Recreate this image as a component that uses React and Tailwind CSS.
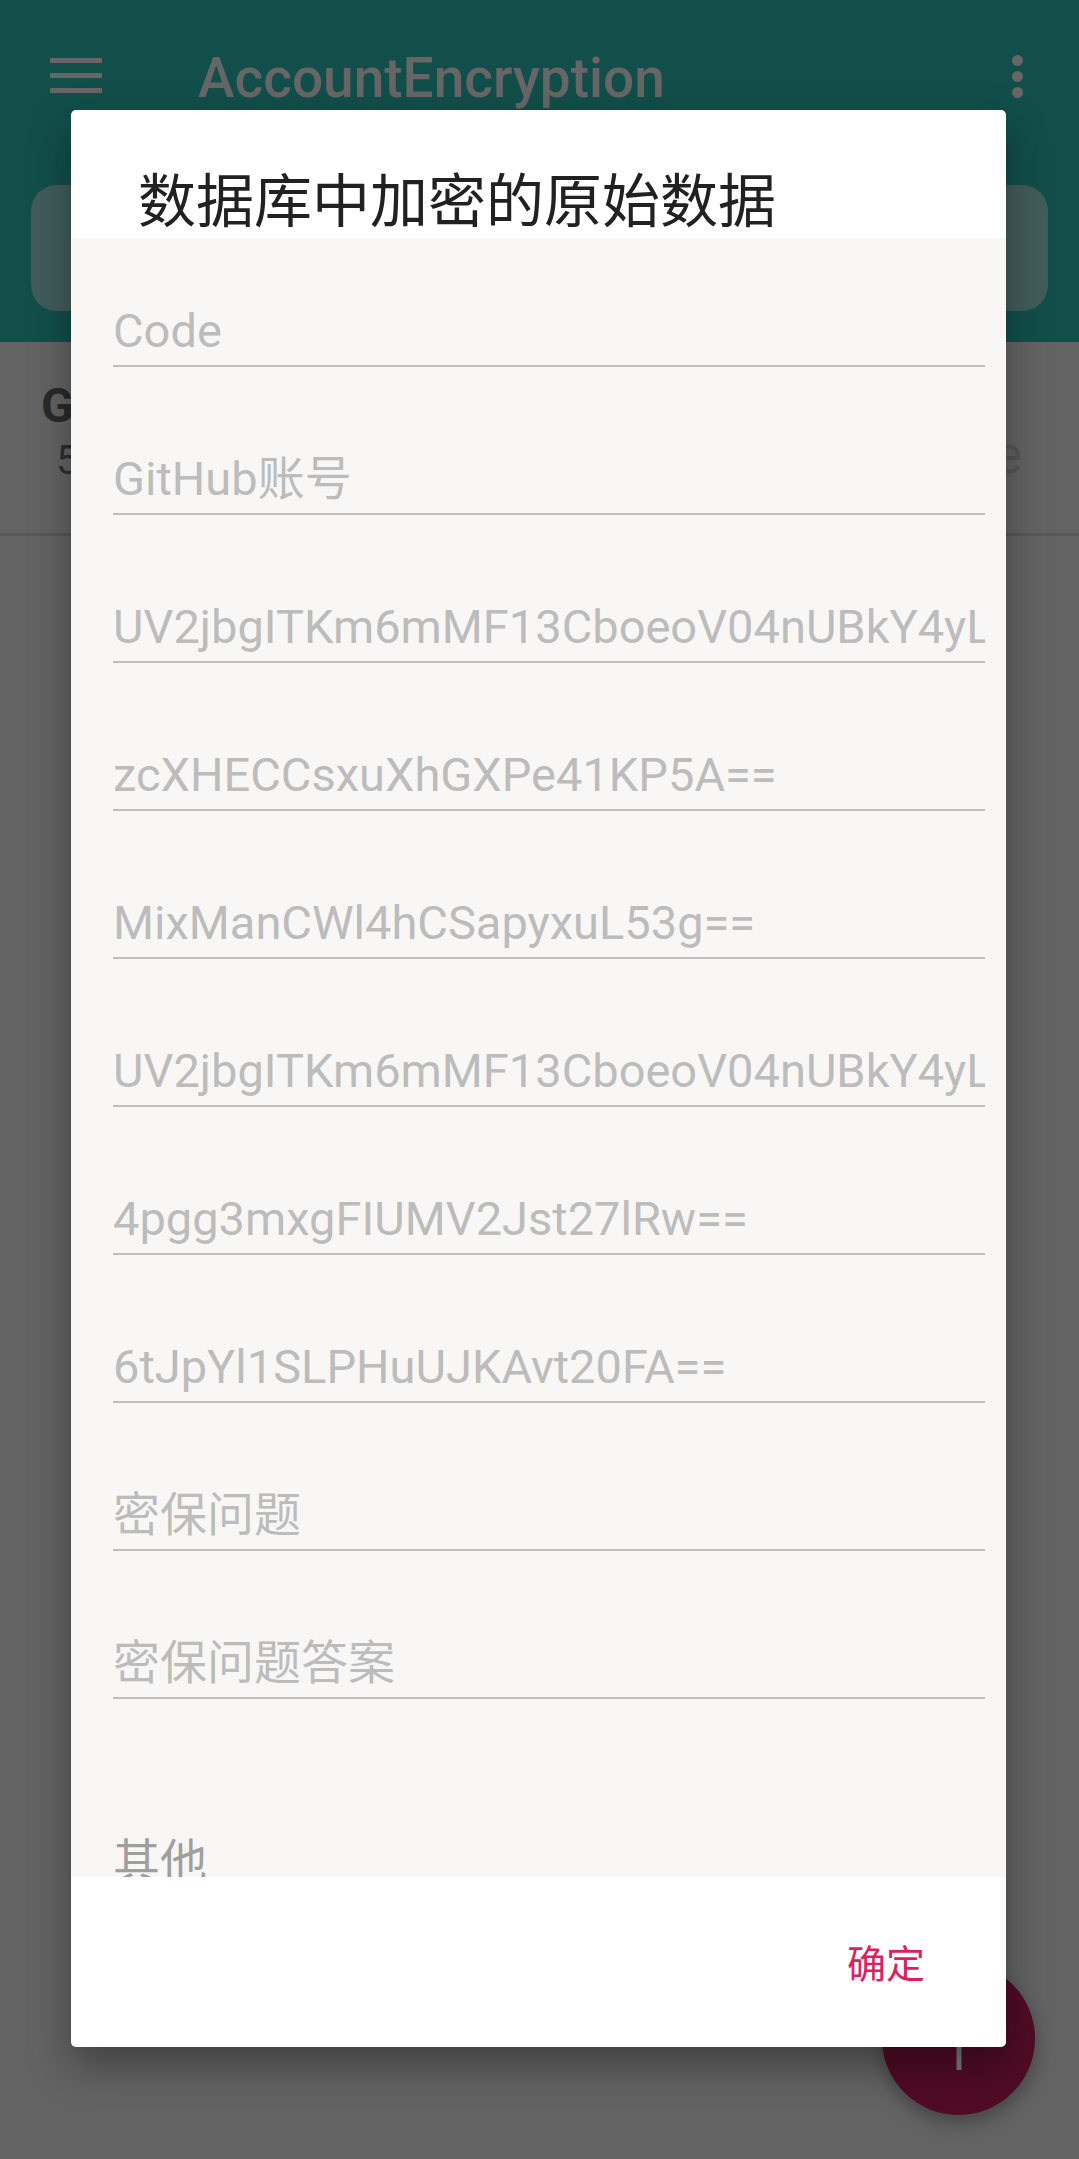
import React from 'react';

const roboto = { fontFamily: 'Roboto, "Noto Sans CJK SC", sans-serif' };

const fields = [
  'Code',
  'GitHub账号',
  'UV2jbgITKm6mMF13CboeoV04nUBkY4yL',
  'zcXHECCsxuXhGXPe41KP5A==',
  'MixManCWl4hCSapyxuL53g==',
  'UV2jbgITKm6mMF13CboeoV04nUBkY4yL',
  '4pgg3mxgFIUMV2Jst27lRw==',
  '6tJpYl1SLPHuUJKAvt20FA==',
  '密保问题',
  '密保问题答案',
];

const Field = ({ text }) => (
  <div className="mb-[19px] border-b-2 border-[#bdbdbd] pt-[65px] pb-[6px]">
    <div className="h-[56px] overflow-hidden whitespace-nowrap text-[47px] leading-[56px] text-[#bcbcbc]">
      {text}
    </div>
  </div>
);

const AppBar = () => (
  <header className="bg-[#124e4a]">
    <div className="flex h-[154px] items-start">
      <div className="ml-[50px] mt-[58px] flex w-[52px] flex-col gap-[10px]">
        <span className="h-[5px] bg-[#666]" />
        <span className="h-[5px] bg-[#666]" />
        <span className="h-[5px] bg-[#666]" />
      </div>
      <h1 className="ml-[96px] mt-[46px] text-[55px] font-medium leading-[64px] text-[#666]">
        AccountEncryption
      </h1>
      <div className="ml-auto mr-[56px] mt-[55px] flex flex-col gap-[5px]">
        <span className="h-[11px] w-[11px] rounded-full bg-[#666]" />
        <span className="h-[11px] w-[11px] rounded-full bg-[#666]" />
        <span className="h-[11px] w-[11px] rounded-full bg-[#666]" />
      </div>
    </div>
    <div className="h-[188px] px-[31px] pt-[31px]">
      <div className="h-[126px] rounded-[26px] bg-[#415c5b]" />
    </div>
  </header>
);

const ListItem = () => (
  <div className="h-[194px] border-b-[3px] border-[#575757] pl-[41px] pr-[57px]">
    <div className="flex items-end justify-between pt-[34px]">
      <div className="text-[48px] font-bold leading-[60px] text-[#2a2a2a]">GitHub</div>
    </div>
    <div className="flex items-end justify-between">
      <div className="pl-[15px] text-[40px] leading-[50px] text-[#2e2e2e]">5</div>
      <div className="-mt-[40px] text-[53px] leading-[62px] text-[#555]">Create</div>
    </div>
  </div>
);

const Dialog = () => (
  <div className="absolute left-[71px] top-[110px] z-20 flex h-[1937px] w-[935px] flex-col overflow-hidden rounded-[5px] bg-white shadow-[0_18px_40px_rgba(0,0,0,0.35)]">
    <div className="h-[128px] shrink-0 overflow-hidden pl-[67px] pt-[63px] text-[58px] leading-[58px] text-[#212121]">
      数据库中加密的原始数据
    </div>
    <div className="flex-1 overflow-hidden bg-[#f8f7f6] pl-[42px] pr-[21px]">
      {fields.map((f, i) => (
        <Field key={i} text={f} />
      ))}
      <div className="pt-[116px] text-[47px] leading-[56px] text-[#a09f9f]">其他</div>
    </div>
    <div className="flex h-[170px] shrink-0 items-center justify-end pr-[81px] pt-[6px]">
      <button className="text-[39px] leading-[48px] text-[#dc1f63]">确定</button>
    </div>
  </div>
);

const Fab = () => (
  <div className="absolute left-[882px] top-[1962px] z-10 flex h-[153px] w-[153px] items-center justify-center rounded-full bg-[#4f0c24] shadow-[0_8px_18px_rgba(0,0,0,0.3)]">
    <svg width="62" height="62" viewBox="0 0 62 62">
      <rect x="28.5" y="0" width="5" height="62" fill="#7a7a7a" />
      <rect x="0" y="28.5" width="62" height="5" fill="#7a7a7a" />
    </svg>
  </div>
);

export default function App() {
  return (
    <div className="relative h-[2159px] w-[1079px] overflow-hidden bg-[#636363]" style={roboto}>
      <AppBar />
      <ListItem />
      <Fab />
      <Dialog />
    </div>
  );
}
